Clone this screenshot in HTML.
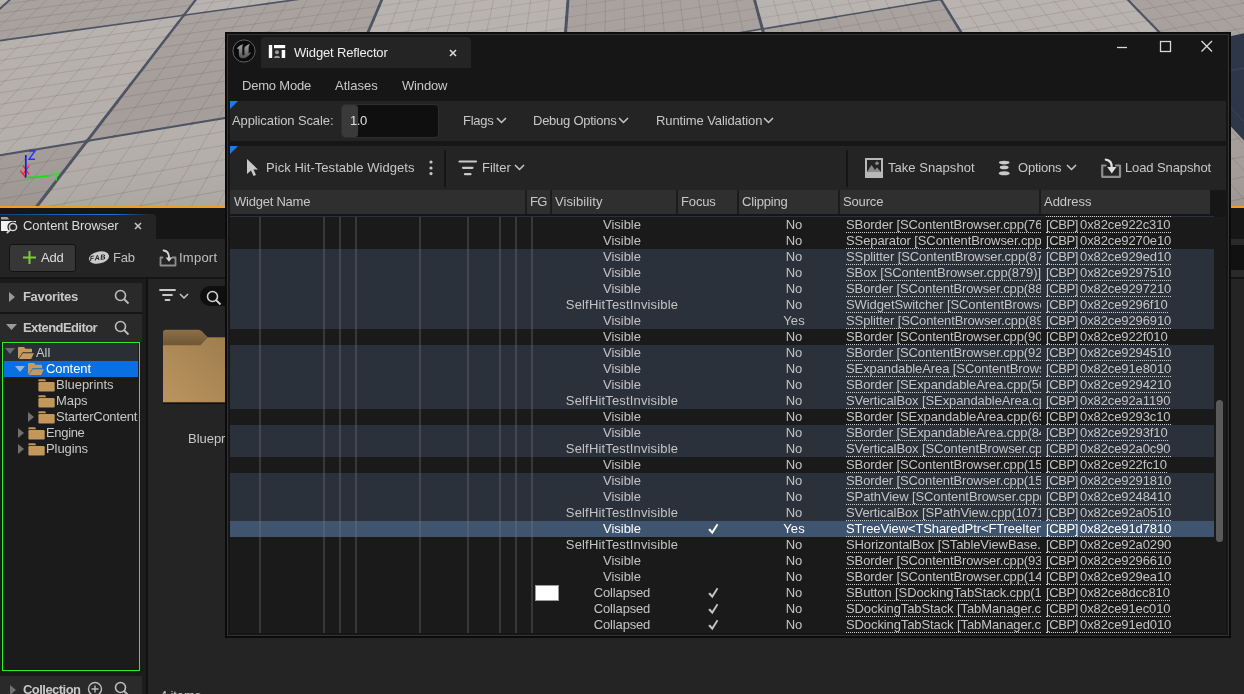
<!DOCTYPE html>
<html><head><meta charset="utf-8"><style>
html,body{margin:0;padding:0;}
body{width:1244px;height:694px;overflow:hidden;position:relative;will-change:transform;background:#242424;font-family:"Liberation Sans", sans-serif;font-size:13px;}
.t{position:absolute;white-space:nowrap;line-height:16px;font-size:13px;}
.r{position:absolute;white-space:nowrap;line-height:15px;height:15px;font-size:13px;overflow:hidden;}
.lk{border-bottom:1px dotted #d0d0d0;}
</style></head><body>
<svg width="1244" height="206" style="position:absolute;left:0;top:0">
<rect width="1244" height="206" fill="#b6b0ad"/>
<polygon points="-295.2,81.5 -42.2,46.5 -200.7,188.5 -531.8,243.4" fill="#a59e9b"/>
<polygon points="-936.3,520.1 -461.3,422.1 -969.2,877.2 -1784.9,1100.7" fill="#a59e9b"/>
<polygon points="64.4,-49.1 250.4,-71.2 183.9,15.2 -42.2,46.5" fill="#a59e9b"/>
<polygon points="-200.7,188.5 87.2,140.9 -66.6,340.6 -461.3,422.1" fill="#a59e9b"/>
<polygon points="183.9,15.2 387.2,-13.0 339.8,99.0 87.2,140.9" fill="#a59e9b"/>
<polygon points="-66.6,340.6 266.7,271.8 138.9,573.6 -348.8,707.2" fill="#a59e9b"/>
<polygon points="420.4,-91.4 576.4,-110.0 571.0,-38.4 387.2,-13.0" fill="#a59e9b"/>
<polygon points="339.8,99.0 563.3,62.0 551.7,213.0 266.7,271.8" fill="#a59e9b"/>
<polygon points="571.0,-38.4 737.9,-61.5 762.4,29.0 563.3,62.0" fill="#a59e9b"/>
<polygon points="551.7,213.0 798.4,162.1 856.6,376.9 532.4,465.7" fill="#a59e9b"/>
<polygon points="720.1,-127.1 852.9,-142.9 890.1,-82.6 737.9,-61.5" fill="#a59e9b"/>
<polygon points="762.4,29.0 940.9,-0.6 1013.9,117.6 798.4,162.1" fill="#a59e9b"/>
<polygon points="890.1,-82.6 1029.6,-101.9 1101.8,-27.2 940.9,-0.6" fill="#a59e9b"/>
<polygon points="1013.9,117.6 1203.9,78.4 1359.2,239.2 1128.3,302.5" fill="#a59e9b"/>
<polygon points="975.9,-157.5 1090.2,-171.1 1157.9,-119.7 1029.6,-101.9" fill="#a59e9b"/>
<polygon points="1101.8,-27.2 1247.6,-51.4 1372.5,43.6 1203.9,78.4" fill="#a59e9b"/>
<polygon points="1157.9,-119.7 1276.2,-136.0 1380.4,-73.4 1247.6,-51.4" fill="#a59e9b"/>
<polygon points="1372.5,43.6 1523.2,12.5 1730.9,137.4 1558.0,184.7" fill="#a59e9b"/>
<path d="M383.2,-3.6L455.6,-13.8M452.8,-4.4L523.8,-14.6M450.0,5.3L522.3,-5.2M520.7,4.5L591.5,-6.0M519.1,14.5L591.2,3.6M591.2,3.6L660.6,-6.8M590.9,13.6L661.5,2.8M661.5,2.8L729.5,-7.7M662.5,12.8L731.6,1.9M731.6,1.9L798.2,-8.5" stroke="#2a2320" stroke-opacity="0.105" stroke-width="0.9" fill="none"/>
<path d="M243.4,-1.9L318.6,-12.2M308.0,7.0L383.2,-3.6M302.4,17.1L379.1,6.2M379.1,6.2L452.8,-4.4M374.8,16.2L450.0,5.3M370.4,26.7L447.0,15.4M447.0,15.4L520.7,4.5M444.0,25.8L519.1,14.5M440.8,36.7L517.4,24.9M517.4,24.9L590.9,13.6M515.6,35.7L590.5,24.0M590.5,24.0L662.5,12.8M590.2,34.8L663.5,23.1M663.5,23.1L733.9,11.9M733.9,11.9L801.6,1.1M801.6,1.1L866.7,-9.3M589.8,46.0L664.5,33.9M664.5,33.9L736.2,22.2M736.2,22.2L805.1,11.0M805.1,11.0L871.3,0.3M871.3,0.3L935.0,-10.1" stroke="#2a2320" stroke-opacity="0.120" stroke-width="0.9" fill="none"/>
<path d="M173.2,-1.1L249.9,-11.4M165.3,8.7L243.4,-1.9M229.8,18.0L308.0,7.0M296.6,27.6L374.8,16.2M290.6,38.6L370.4,26.7M365.8,37.6L444.0,25.8M361.0,48.9L440.8,36.7M437.5,47.9L515.6,35.7M434.1,59.7L513.8,47.0M513.8,47.0L590.2,34.8M511.9,58.7L589.8,46.0M589.0,69.8L666.8,56.6M666.8,56.6L741.2,44.1M741.2,44.1L812.6,32.0M812.6,32.0L881.1,20.4M881.1,20.4L947.0,9.3M947.0,9.3L1010.2,-1.4M1010.2,-1.4L1071.1,-11.7M667.9,68.7L743.9,55.6M743.9,55.6L816.6,43.1M816.6,43.1L886.3,31.1M886.3,31.1L953.3,19.5" stroke="#2a2320" stroke-opacity="0.135" stroke-width="0.9" fill="none"/>
<path d="M12.2,-18.3L-5.7,-2.8M37.2,-8.3L19.8,7.8M19.8,7.8L1.3,24.9M1.3,24.9L-18.4,43.2M58.4,-11.0L41.7,4.9M41.7,4.9L23.9,21.9M23.9,21.9L5.0,39.9M5.0,39.9L-15.1,59.2M79.3,-13.7L63.3,2.1M63.3,2.1L46.3,18.9M46.3,18.9L28.3,36.7M28.3,36.7L9.0,55.7M9.0,55.7L-11.6,76.1M100.0,-16.3L84.7,-0.7M84.7,-0.7L68.5,15.9M68.5,15.9L51.2,33.5M51.2,33.5L32.8,52.3M32.8,52.3L13.2,72.4M13.2,72.4L-7.8,94.0M120.5,-19.0L105.9,-3.5M105.9,-3.5L90.4,12.9M90.4,12.9L74.0,30.4M74.0,30.4L56.4,49.0M56.4,49.0L37.7,68.9M37.7,68.9L17.6,90.1M17.6,90.1L-3.9,112.9M-3.9,112.9L-27.0,137.4M126.9,-6.2L112.1,10.0M112.1,10.0L96.4,27.3M96.4,27.3L79.7,45.7M79.7,45.7L61.9,65.3M61.9,65.3L42.8,86.3M42.8,86.3L22.3,108.8M22.3,108.8L0.3,133.1M0.3,133.1L-23.4,159.2M147.6,-9.0L133.6,7.1M133.6,7.1L118.7,24.2M118.7,24.2L102.8,42.4M102.8,42.4L85.8,61.8M85.8,61.8L67.7,82.6M67.7,82.6L48.2,104.8M48.2,104.8L27.3,128.7M27.3,128.7L4.8,154.5M4.8,154.5L-19.5,182.3M168.2,-11.7L154.8,4.3M154.8,4.3L140.6,21.2M140.6,21.2L125.5,39.2M125.5,39.2L109.4,58.4M109.4,58.4L92.2,78.9M92.2,78.9L73.8,100.9M73.8,100.9L54.0,124.5M54.0,124.5L32.6,149.9M32.6,149.9L9.6,177.3M9.6,177.3L-15.4,207.1M188.5,-14.3L175.9,1.4M175.9,1.4L162.4,18.1M162.4,18.1L148.1,35.9M148.1,35.9L132.8,54.9M132.8,54.9L116.5,75.2M116.5,75.2L99.0,96.9M99.0,96.9L80.3,120.2M80.3,120.2L60.1,145.3M60.1,145.3L38.3,172.4M38.3,172.4L14.7,201.8M14.7,201.8L-10.9,233.6M228.6,-19.6L217.3,-4.2M217.3,-4.2L205.2,12.2M205.2,12.2L192.4,29.6M192.4,29.6L178.8,48.2M178.8,48.2L164.2,68.0M164.2,68.0L148.6,89.2M148.6,89.2L131.9,112.0M131.9,112.0L113.9,136.4M113.9,136.4L94.5,162.8M94.5,162.8L73.5,191.3M73.5,191.3L50.8,222.3M237.6,-6.9L226.3,9.3M226.3,9.3L214.2,26.5M214.2,26.5L201.4,44.9M201.4,44.9L187.6,64.5M187.6,64.5L173.0,85.4M173.0,85.4L157.2,107.9M157.2,107.9L140.3,132.1M140.3,132.1L122.1,158.1M122.1,158.1L102.4,186.2M102.4,186.2L81.0,216.7M257.8,-9.6L247.1,6.4M247.1,6.4L235.8,23.5M235.8,23.5L223.7,41.6M223.7,41.6L210.8,61.0M210.8,61.0L197.0,81.7M197.0,81.7L182.2,103.9M182.2,103.9L166.4,127.7M166.4,127.7L149.2,153.4M149.2,153.4L130.8,181.2M130.8,181.2L110.7,211.3M277.8,-12.3L267.8,3.6M267.8,3.6L257.1,20.4M257.1,20.4L245.8,38.4M245.8,38.4L233.7,57.5M233.7,57.5L220.8,78.0M220.8,78.0L206.9,99.9M206.9,99.9L192.1,123.5M192.1,123.5L176.1,148.8M176.1,148.8L158.8,176.2M158.8,176.2L140.1,205.9M140.1,205.9L119.7,238.1M297.6,-15.0L288.2,0.7M288.2,0.7L278.2,17.4M278.2,17.4L267.6,35.2M267.6,35.2L256.3,54.1M256.3,54.1L244.3,74.3M244.3,74.3L231.4,96.0M231.4,96.0L217.5,119.3M217.5,119.3L202.5,144.3M202.5,144.3L186.4,171.3M186.4,171.3L169.0,200.6M169.0,200.6L150.0,232.3M317.1,-17.6L308.4,-2.1M308.4,-2.1L299.1,14.5M299.1,14.5L289.3,32.0M289.3,32.0L278.7,50.7M278.7,50.7L267.5,70.7M267.5,70.7L255.5,92.1M255.5,92.1L242.6,115.1M242.6,115.1L228.7,139.8M228.7,139.8L213.7,166.5M213.7,166.5L197.5,195.3M197.5,195.3L179.9,226.6M336.5,-20.2L328.4,-4.8M328.4,-4.8L319.8,11.5M319.8,11.5L310.6,28.9M310.6,28.9L300.9,47.4M300.9,47.4L290.4,67.2M290.4,67.2L279.3,88.3M279.3,88.3L267.3,111.0M267.3,111.0L254.5,135.4M254.5,135.4L240.6,161.7M240.6,161.7L225.6,190.1M225.6,190.1L209.3,221.0M348.2,-7.6L340.2,8.6M340.2,8.6L331.8,25.8M331.8,25.8L322.7,44.1M322.7,44.1L313.1,63.6M313.1,63.6L302.8,84.5M302.8,84.5L291.8,107.0M291.8,107.0L279.9,131.0M279.9,131.0L267.1,157.0M267.1,157.0L253.3,185.1M253.3,185.1L238.3,215.5M367.8,-10.3L360.5,5.7M360.5,5.7L352.7,22.7M352.7,22.7L344.4,40.8M344.4,40.8L335.5,60.2M335.5,60.2L326.1,80.8M326.1,80.8L315.9,103.0M315.9,103.0L305.1,126.7M305.1,126.7L293.3,152.4M293.3,152.4L280.6,180.0M280.6,180.0L266.9,210.0M266.9,210.0L252.0,242.6M406.4,-15.6L400.3,0.0M400.3,0.0L393.8,16.7M393.8,16.7L387.0,34.4M387.0,34.4L379.6,53.3M379.6,53.3L371.8,73.5M371.8,73.5L363.4,95.1M363.4,95.1L354.4,118.3M354.4,118.3L344.7,143.3M344.7,143.3L334.2,170.2M334.2,170.2L322.9,199.4M322.9,199.4L310.6,231.0M425.4,-18.3L419.9,-2.7M419.9,-2.7L414.1,13.7M414.1,13.7L407.9,31.3M407.9,31.3L401.3,49.9M401.3,49.9L394.2,69.9M394.2,69.9L386.7,91.2M386.7,91.2L378.6,114.1M378.6,114.1L369.8,138.8M369.8,138.8L360.4,165.4M360.4,165.4L350.3,194.1M350.3,194.1L339.2,225.3M439.3,-5.5L434.1,10.8M434.1,10.8L428.6,28.1M428.6,28.1L422.7,46.6M422.7,46.6L416.4,66.3M416.4,66.3L409.7,87.4M409.7,87.4L402.4,110.1M402.4,110.1L394.7,134.4M394.7,134.4L386.3,160.6M386.3,160.6L377.3,189.0M377.3,189.0L367.4,219.7M458.6,-8.2L454.0,7.9M454.0,7.9L449.1,25.1M449.1,25.1L443.9,43.3M443.9,43.3L438.3,62.8M438.3,62.8L432.4,83.7M432.4,83.7L426.0,106.0M426.0,106.0L419.2,130.0M419.2,130.0L411.8,155.9M411.8,155.9L403.9,183.9M403.9,183.9L395.2,214.2M477.6,-10.9L473.6,5.0M473.6,5.0L469.3,22.0M469.3,22.0L464.8,40.1M464.8,40.1L460.0,59.3M460.0,59.3L454.9,79.9M454.9,79.9L449.3,102.0M449.3,102.0L443.4,125.7M443.4,125.7L437.0,151.3M437.0,151.3L430.1,178.9M430.1,178.9L422.7,208.8M422.7,208.8L414.5,241.3M496.4,-13.6L493.0,2.2M493.0,2.2L489.4,19.0M489.4,19.0L485.5,36.8M485.5,36.8L481.4,55.9M481.4,55.9L477.1,76.3M477.1,76.3L472.4,98.1M472.4,98.1L467.3,121.5M467.3,121.5L461.9,146.7M461.9,146.7L456.0,174.0M456.0,174.0L449.7,203.4M449.7,203.4L442.8,235.5M515.0,-16.3L512.2,-0.6M512.2,-0.6L509.2,16.0M509.2,16.0L506.0,33.7M506.0,33.7L502.6,52.5M502.6,52.5L499.0,72.6M499.0,72.6L495.1,94.2M495.1,94.2L490.9,117.3M490.9,117.3L486.4,142.2M486.4,142.2L481.6,169.1M481.6,169.1L476.3,198.2M476.3,198.2L470.6,229.7M533.5,-18.9L531.2,-3.4M531.2,-3.4L528.8,13.0M528.8,13.0L526.3,30.5M526.3,30.5L523.6,49.1M523.6,49.1L520.7,69.0M520.7,69.0L517.6,90.3M517.6,90.3L514.2,113.2M514.2,113.2L510.7,137.8M510.7,137.8L506.8,164.3M506.8,164.3L502.6,192.9M502.6,192.9L498.1,224.1M550.1,-6.2L548.3,10.1M548.3,10.1L546.3,27.4M546.3,27.4L544.3,45.8M544.3,45.8L542.1,65.5M542.1,65.5L539.8,86.5M539.8,86.5L537.3,109.1M537.3,109.1L534.6,133.4M534.6,133.4L531.7,159.5M531.7,159.5L528.5,187.8M528.5,187.8L525.1,218.5M587.1,-11.6L586.5,4.3M586.5,4.3L585.8,21.3M585.8,21.3L585.0,39.3M585.0,39.3L584.2,58.5M584.2,58.5L583.4,79.1M583.4,79.1L582.4,101.1M582.4,101.1L581.5,124.8M581.5,124.8L580.4,150.2M580.4,150.2L579.2,177.8M579.2,177.8L578.0,207.6M578.0,207.6L576.7,240.0M605.4,-14.3L605.3,1.5M605.3,1.5L605.2,18.2M605.2,18.2L605.1,36.1M605.1,36.1L604.9,55.1M604.9,55.1L604.8,75.4M604.8,75.4L604.6,97.2M604.6,97.2L604.5,120.5M604.5,120.5L604.3,145.7M604.3,145.7L604.1,172.8M604.1,172.8L603.9,202.2M603.9,202.2L603.7,234.2M623.5,-16.9L623.9,-1.3M623.9,-1.3L624.4,15.3M624.4,15.3L624.9,32.9M624.9,32.9L625.4,51.7M625.4,51.7L625.9,71.8M625.9,71.8L626.5,93.3M626.5,93.3L627.2,116.4M627.2,116.4L627.9,141.2M627.9,141.2L628.6,168.0M628.6,168.0L629.4,197.0M629.4,197.0L630.3,228.4M641.4,-19.5L642.3,-4.1M642.3,-4.1L643.4,12.3M643.4,12.3L644.5,29.8M644.5,29.8L645.6,48.3M645.6,48.3L646.9,68.2M646.9,68.2L648.2,89.4M648.2,89.4L649.6,112.2M649.6,112.2L651.1,136.7M651.1,136.7L652.8,163.2M652.8,163.2L654.6,191.8M654.6,191.8L656.5,222.8M660.6,-6.8L662.2,9.4M662.2,9.4L663.8,26.6M663.8,26.6L665.6,45.0M665.6,45.0L667.5,64.7M667.5,64.7L669.6,85.6M669.6,85.6L671.8,108.2M671.8,108.2L674.1,132.4M674.1,132.4L676.6,158.4M676.6,158.4L679.4,186.6M679.4,186.6L682.3,217.2M678.6,-9.6L680.8,6.5M680.8,6.5L683.0,23.6M683.0,23.6L685.4,41.8M685.4,41.8L688.0,61.2M688.0,61.2L690.7,81.9M690.7,81.9L693.6,104.1M693.6,104.1L696.8,128.0M696.8,128.0L700.2,153.8M700.2,153.8L703.8,181.6M703.8,181.6L707.8,211.7M696.5,-12.3L699.2,3.6M699.2,3.6L702.0,20.5M702.0,20.5L705.0,38.5M705.0,38.5L708.2,57.7M708.2,57.7L711.6,78.2M711.6,78.2L715.2,100.2M715.2,100.2L719.2,123.8M719.2,123.8L723.4,149.2M723.4,149.2L728.0,176.6M728.0,176.6L732.9,206.3M732.9,206.3L738.3,238.7M714.2,-14.9L717.4,0.8M717.4,0.8L720.7,17.5M720.7,17.5L724.3,35.3M724.3,35.3L728.1,54.3M728.1,54.3L732.2,74.5M732.2,74.5L736.6,96.2M736.6,96.2L741.3,119.5M741.3,119.5L746.3,144.6M746.3,144.6L751.8,171.7M751.8,171.7L757.7,201.0M757.7,201.0L764.1,232.9M731.7,-17.6L735.4,-2.0M735.4,-2.0L739.3,14.5M739.3,14.5L743.5,32.1M743.5,32.1L747.9,50.9M747.9,50.9L752.6,70.9M752.6,70.9L757.7,92.4M757.7,92.4L763.1,115.4M763.1,115.4L768.9,140.1M768.9,140.1L775.2,166.9M775.2,166.9L782.1,195.8M782.1,195.8L789.5,227.1M770.9,-7.5L775.8,8.7M775.8,8.7L781.1,25.9M781.1,25.9L786.7,44.2M786.7,44.2L792.7,63.8M792.7,63.8L799.1,84.8M799.1,84.8L805.9,107.2M805.9,107.2L813.3,131.3M813.3,131.3L821.3,157.4M821.3,157.4L829.9,185.5M829.9,185.5L839.2,216.0M788.4,-10.2L793.8,5.8M793.8,5.8L799.6,22.8M799.6,22.8L805.8,41.0M805.8,41.0L812.4,60.3M812.4,60.3L819.4,81.0M819.4,81.0L827.0,103.2M827.0,103.2L835.1,127.0M835.1,127.0L843.8,152.7M843.8,152.7L853.2,180.4M853.2,180.4L863.5,210.5M863.5,210.5L874.6,243.2M805.7,-12.9L811.6,2.9M811.6,2.9L817.9,19.8M817.9,19.8L824.7,37.7M824.7,37.7L831.8,56.9M831.8,56.9L839.5,77.3M839.5,77.3L847.7,99.2M847.7,99.2L856.6,122.8M856.6,122.8L866.1,148.1M866.1,148.1L876.3,175.5M876.3,175.5L887.4,205.1M887.4,205.1L899.5,237.3M822.8,-15.6L829.2,0.1M829.2,0.1L836.1,16.8M836.1,16.8L843.3,34.5M843.3,34.5L851.1,53.5M851.1,53.5L859.4,73.7M859.4,73.7L868.2,95.3M868.2,95.3L877.8,118.6M877.8,118.6L888.0,143.6M888.0,143.6L899.1,170.6M899.1,170.6L911.0,199.8M911.0,199.8L924.1,231.6M839.7,-18.2L846.7,-2.7M846.7,-2.7L854.0,13.8M854.0,13.8L861.8,31.4M861.8,31.4L870.1,50.1M870.1,50.1L879.0,70.1M879.0,70.1L888.5,91.5M888.5,91.5L898.7,114.4M898.7,114.4L909.7,139.1M909.7,139.1L921.5,165.7M921.5,165.7L934.3,194.6M934.3,194.6L948.2,225.9M863.9,-5.4L871.7,10.9M871.7,10.9L880.1,28.3M880.1,28.3L888.9,46.8M888.9,46.8L898.4,66.5M898.4,66.5L908.5,87.6M908.5,87.6L919.4,110.3M919.4,110.3L931.1,134.7M931.1,134.7L943.7,161.0M943.7,161.0L957.3,189.4M957.3,189.4L972.1,220.3M881.0,-8.2L889.3,8.0M889.3,8.0L898.1,25.2M898.1,25.2L907.5,43.5M907.5,43.5L917.6,63.0M917.6,63.0L928.3,83.9M928.3,83.9L939.8,106.3M939.8,106.3L952.2,130.3M952.2,130.3L965.5,156.3M965.5,156.3L979.9,184.3M979.9,184.3L995.6,214.7M897.9,-10.9L906.7,5.1M906.7,5.1L916.0,22.1M916.0,22.1L925.9,40.2M925.9,40.2L936.5,59.5M936.5,59.5L947.8,80.1M947.8,80.1L960.0,102.3M960.0,102.3L973.0,126.0M973.0,126.0L987.1,151.6M987.1,151.6L1002.3,179.3M1002.3,179.3L1018.7,209.3M1018.7,209.3L1036.6,241.9M914.6,-13.6L923.9,2.3M923.9,2.3L933.7,19.1M933.7,19.1L944.1,37.0M944.1,37.0L955.3,56.1M955.3,56.1L967.2,76.5M967.2,76.5L979.9,98.3M979.9,98.3L993.6,121.8M993.6,121.8L1008.4,147.1M1008.4,147.1L1024.3,174.3M1024.3,174.3L1041.5,203.9M1041.5,203.9L1060.3,236.0M947.6,-18.9L957.7,-3.4M957.7,-3.4L968.5,13.1M968.5,13.1L979.9,30.6M979.9,30.6L992.1,49.3M992.1,49.3L1005.1,69.2M1005.1,69.2L1019.0,90.6M1019.0,90.6L1034.0,113.5M1034.0,113.5L1050.1,138.1M1050.1,138.1L1067.4,164.6M1067.4,164.6L1086.2,193.4M1086.2,193.4L1106.6,224.6M974.4,-6.1L985.6,10.2M985.6,10.2L997.5,27.5M997.5,27.5L1010.2,46.0M1010.2,46.0L1023.7,65.7M1023.7,65.7L1038.3,86.8M1038.3,86.8L1053.8,109.4M1053.8,109.4L1070.5,133.7M1070.5,133.7L1088.6,159.9M1088.6,159.9L1108.1,188.2M1108.1,188.2L1129.2,219.0M990.9,-8.8L1002.5,7.3M1002.5,7.3L1014.9,24.4M1014.9,24.4L1028.1,42.7M1028.1,42.7L1042.2,62.2M1042.2,62.2L1057.2,83.0M1057.2,83.0L1073.4,105.3M1073.4,105.3L1090.7,129.3M1090.7,129.3L1109.4,155.2M1109.4,155.2L1129.6,183.2M1129.6,183.2L1151.5,213.5M1007.2,-11.6L1019.3,4.4M1019.3,4.4L1032.1,21.4M1032.1,21.4L1045.8,39.4M1045.8,39.4L1060.4,58.7M1060.4,58.7L1076.0,79.3M1076.0,79.3L1092.7,101.3M1092.7,101.3L1110.7,125.0M1110.7,125.0L1130.0,150.6M1130.0,150.6L1150.9,178.2M1150.9,178.2L1173.5,208.0M1173.5,208.0L1198.1,240.5M1023.4,-14.2L1035.9,1.6M1035.9,1.6L1049.2,18.3M1049.2,18.3L1063.3,36.2M1063.3,36.2L1078.4,55.2M1078.4,55.2L1094.5,75.6M1094.5,75.6L1111.8,97.4M1111.8,97.4L1130.3,120.8M1130.3,120.8L1150.3,146.0M1150.3,146.0L1171.9,173.2M1171.9,173.2L1195.2,202.7M1195.2,202.7L1220.6,234.7M1039.4,-16.9L1052.3,-1.2M1052.3,-1.2L1066.0,15.4M1066.0,15.4L1080.6,33.0M1080.6,33.0L1096.2,51.8M1096.2,51.8L1112.8,72.0M1112.8,72.0L1130.7,93.5M1130.7,93.5L1149.8,116.6M1149.8,116.6L1170.4,141.5M1170.4,141.5L1192.6,168.3M1192.6,168.3L1216.6,197.4M1216.6,197.4L1242.7,229.0M1055.2,-19.5L1068.5,-4.0M1068.5,-4.0L1082.7,12.4M1082.7,12.4L1097.8,29.9M1097.8,29.9L1113.8,48.5M1113.8,48.5L1130.9,68.4M1130.9,68.4L1149.3,89.7M1149.3,89.7L1169.0,112.5M1169.0,112.5L1190.1,137.1M1190.1,137.1L1213.0,163.5M1213.0,163.5L1237.7,192.2M1237.7,192.2L1264.5,223.3M1084.6,-6.8L1099.2,9.5M1099.2,9.5L1114.7,26.8M1114.7,26.8L1131.2,45.2M1131.2,45.2L1148.8,64.8M1148.8,64.8L1167.7,85.9M1167.7,85.9L1187.9,108.4M1187.9,108.4L1209.7,132.7M1209.7,132.7L1233.1,158.8M1233.1,158.8L1258.4,187.1M1100.5,-9.5L1115.5,6.6M1115.5,6.6L1131.5,23.7M1131.5,23.7L1148.4,41.9M1148.4,41.9L1166.5,61.3M1166.5,61.3L1185.9,82.1M1185.9,82.1L1206.6,104.4M1206.6,104.4L1228.9,128.3M1228.9,128.3L1253.0,154.1M1131.9,-14.9L1147.7,0.9M1147.7,0.9L1164.4,17.6M1164.4,17.6L1182.3,35.4M1182.3,35.4L1201.3,54.4M1201.3,54.4L1221.6,74.7M1221.6,74.7L1243.4,96.5M1243.4,96.5L1266.8,119.8M1147.3,-17.5L1163.5,-1.9M1163.5,-1.9L1180.7,14.6M1180.7,14.6L1198.9,32.3M1198.9,32.3L1218.4,51.0M1218.4,51.0L1239.2,71.1M1239.2,71.1L1261.4,92.6M1162.6,-20.1L1179.2,-4.7M1179.2,-4.7L1196.7,11.7M1196.7,11.7L1215.4,29.1M1215.4,29.1L1235.3,47.7M1235.3,47.7L1256.5,67.5M1194.7,-7.5L1212.6,8.8M1212.6,8.8L1231.7,26.0M1231.7,26.0L1252.0,44.4M1210.0,-10.2L1228.3,5.9M1228.3,5.9L1247.8,22.9M1247.8,22.9L1268.5,41.1M1225.2,-12.9L1243.9,3.0M1243.9,3.0L1263.7,19.9M1240.2,-15.5L1259.3,0.2M-38.4,1.4L42.5,-9.0M-50.4,11.3L32.3,0.5M32.3,0.5L111.8,-9.8M-62.7,21.6L21.7,10.4M21.7,10.4L102.9,-0.3M102.9,-0.3L180.9,-10.6M-75.5,32.2L10.7,20.7M10.7,20.7L93.6,9.6M93.6,9.6L173.2,-1.1M-88.9,43.3L-0.7,31.3M-0.7,31.3L84.0,19.8M84.0,19.8L165.3,8.7M-24.9,53.9L63.6,41.4M63.6,41.4L148.4,29.5M148.4,29.5L229.8,18.0M-37.7,65.8L52.8,52.9M52.8,52.9L139.5,40.5M139.5,40.5L222.6,28.6M222.6,28.6L302.4,17.1M-51.0,78.3L41.5,64.8M41.5,64.8L130.2,51.9M130.2,51.9L215.1,39.5M215.1,39.5L296.6,27.6M-65.0,91.2L29.8,77.2M29.8,77.2L120.5,63.8M120.5,63.8L207.3,50.9M207.3,50.9L290.6,38.6M-79.5,104.8L17.6,90.1M17.6,90.1L110.5,76.1M110.5,76.1L199.3,62.7M199.3,62.7L284.3,49.9M284.3,49.9L365.8,37.6M-94.6,118.9L4.9,103.6M4.9,103.6L100.0,89.0M100.0,89.0L190.8,75.1M190.8,75.1L277.8,61.7M277.8,61.7L361.0,48.9M-8.4,117.7L89.0,102.4M89.0,102.4L182.1,87.9M182.1,87.9L271.0,74.0M271.0,74.0L356.0,60.7M356.0,60.7L437.5,47.9M-22.2,132.4L77.6,116.5M77.6,116.5L172.9,101.3M172.9,101.3L263.9,86.8M263.9,86.8L350.8,72.9M350.8,72.9L434.1,59.7M-36.7,147.8L65.7,131.1M65.7,131.1L163.3,115.3M163.3,115.3L256.5,100.1M256.5,100.1L345.4,85.7M345.4,85.7L430.5,71.9M430.5,71.9L511.9,58.7M-67.9,180.8L40.2,162.5M40.2,162.5L142.9,145.2M142.9,145.2L240.7,128.6M240.7,128.6L333.9,112.9M333.9,112.9L422.9,97.9M422.9,97.9L507.8,83.5M507.8,83.5L589.0,69.8M-84.6,198.5L26.5,179.4M26.5,179.4L132.0,161.2M132.0,161.2L232.3,143.9M232.3,143.9L327.8,127.4M327.8,127.4L418.8,111.7M418.8,111.7L505.6,96.7M505.6,96.7L588.6,82.4M588.6,82.4L667.9,68.7M953.3,19.5L1017.6,8.4M1017.6,8.4L1079.4,-2.2M1079.4,-2.2L1138.9,-12.5M-102.1,217.1L12.2,197.0M12.2,197.0L120.6,177.9M120.6,177.9L223.5,159.8M223.5,159.8L321.4,142.6M321.4,142.6L414.6,126.2M414.6,126.2L503.4,110.5M503.4,110.5L588.2,95.6M588.2,95.6L669.1,81.3M669.1,81.3L746.6,67.7M746.6,67.7L820.7,54.6M820.7,54.6L891.7,42.1M891.7,42.1L959.9,30.1M959.9,30.1L1025.2,18.6M1025.2,18.6L1088.0,7.6M1088.0,7.6L1148.4,-3.0M1148.4,-3.0L1206.5,-13.3M-2.9,215.6L108.5,195.5M108.5,195.5L214.2,176.5M214.2,176.5L314.6,158.4M314.6,158.4L410.1,141.3M410.1,141.3L501.0,124.9M501.0,124.9L587.7,109.3M587.7,109.3L670.4,94.5M670.4,94.5L749.4,80.3M749.4,80.3L825.0,66.7M825.0,66.7L897.4,53.6M897.4,53.6L966.7,41.2M966.7,41.2L1033.2,29.2M1033.2,29.2L1097.0,17.8M1097.0,17.8L1158.3,6.7M1158.3,6.7L1217.2,-3.9M1217.2,-3.9L1273.9,-14.1M95.9,214.0L204.6,194.0M204.6,194.0L307.6,175.1M307.6,175.1L405.5,157.1M405.5,157.1L498.6,140.0M498.6,140.0L587.2,123.7M587.2,123.7L671.8,108.2M671.8,108.2L752.4,93.3M752.4,93.3L829.5,79.2M829.5,79.2L903.2,65.6M903.2,65.6L973.8,52.7M973.8,52.7L1041.4,40.2M1041.4,40.2L1106.3,28.3M1106.3,28.3L1168.5,16.9M1168.5,16.9L1228.3,5.9M1228.3,5.9L1285.8,-4.7M194.4,212.4L300.2,192.5M300.2,192.5L400.6,173.7M400.6,173.7L496.0,155.7M496.0,155.7L586.7,138.7M586.7,138.7L673.1,122.5M673.1,122.5L755.5,107.0M755.5,107.0L834.2,92.2M834.2,92.2L909.3,78.1M909.3,78.1L981.2,64.6M981.2,64.6L1050.0,51.7M1050.0,51.7L1115.9,39.3M1115.9,39.3L1179.1,27.4M1179.1,27.4L1239.8,16.0M1239.8,16.0L1298.2,5.0M183.7,231.8L292.5,210.9M292.5,210.9L395.5,191.1M395.5,191.1L493.3,172.3M493.3,172.3L586.2,154.4M586.2,154.4L674.6,137.4M674.6,137.4L758.8,121.2M758.8,121.2L839.0,105.8M839.0,105.8L915.6,91.1M915.6,91.1L988.8,77.0M988.8,77.0L1058.9,63.6M1058.9,63.6L1125.9,50.7M1125.9,50.7L1190.2,38.3M1190.2,38.3L1251.8,26.5M284.3,230.1L390.2,209.3M390.2,209.3L490.5,189.6M490.5,189.6L585.7,170.9M585.7,170.9L676.1,153.1M676.1,153.1L762.2,136.1M762.2,136.1L844.1,120.0M844.1,120.0L922.2,104.7M922.2,104.7L996.9,90.0M996.9,90.0L1068.1,76.0M1068.1,76.0L1136.3,62.5M1136.3,62.5L1201.7,49.7M1201.7,49.7L1264.2,37.4M384.5,228.5L487.5,207.8M487.5,207.8L585.1,188.1M585.1,188.1L677.7,169.5M677.7,169.5L765.7,151.7M765.7,151.7L849.4,134.9M849.4,134.9L929.2,118.8M929.2,118.8L1005.2,103.5M1005.2,103.5L1077.8,88.9M1077.8,88.9L1147.2,74.9M1147.2,74.9L1213.6,61.5M1213.6,61.5L1277.2,48.7M583.9,225.3L681.1,204.7M681.1,204.7L773.3,185.2M773.3,185.2L860.8,166.7M860.8,166.7L943.9,149.1M943.9,149.1L1023.0,132.3M1023.0,132.3L1098.4,116.4M1098.4,116.4L1170.3,101.2M1170.3,101.2L1239.0,86.7M1239.0,86.7L1304.6,72.8M683.0,223.7L777.4,203.2M777.4,203.2L866.9,183.7M866.9,183.7L951.8,165.3M951.8,165.3L1032.6,147.8M1032.6,147.8L1109.4,131.1M1109.4,131.1L1182.6,115.2M1182.6,115.2L1252.5,100.0M781.7,222.1L873.3,201.6M873.3,201.6L960.1,182.3M960.1,182.3L1042.6,163.9M1042.6,163.9L1120.9,146.4M1120.9,146.4L1195.5,129.8M1195.5,129.8L1266.6,114.0M880.0,220.5L968.8,200.1M968.8,200.1L1053.0,180.8M1053.0,180.8L1133.0,162.5M1133.0,162.5L1209.0,145.1M1209.0,145.1L1281.3,128.6M978.0,218.9L1064.0,198.6M1064.0,198.6L1145.6,179.4M1145.6,179.4L1223.1,161.2M1223.1,161.2L1296.7,143.8M1075.6,217.3L1158.9,197.1M1158.9,197.1L1237.8,178.0M1237.8,178.0L1312.8,159.8M1172.8,215.7L1253.3,195.6" stroke="#2a2320" stroke-opacity="0.150" stroke-width="0.9" fill="none"/>
<defs><linearGradient id="vg" x1="0" y1="0" x2="0" y2="1"><stop offset="0" stop-color="#fff" stop-opacity="0.05"/><stop offset="0.5" stop-color="#fff" stop-opacity="0"/><stop offset="1" stop-color="#000" stop-opacity="0.05"/></linearGradient></defs><rect width="1244" height="206" fill="url(#vg)"/>
<g stroke="#4f5463" stroke-linecap="round"><line x1="26.3" y1="-14.9" x2="12.3" y2="-2.4" stroke-width="1.89"/><line x1="12.3" y1="-2.4" x2="-2.3" y2="10.7" stroke-width="1.94"/><line x1="-2.3" y1="10.7" x2="-17.6" y2="24.5" stroke-width="1.98"/><line x1="208.7" y1="-17.0" x2="199.1" y2="-4.6" stroke-width="2.24"/><line x1="199.1" y1="-4.6" x2="189.1" y2="8.4" stroke-width="2.29"/><line x1="189.1" y1="8.4" x2="178.6" y2="22.1" stroke-width="2.35"/><line x1="178.6" y1="22.1" x2="167.5" y2="36.4" stroke-width="2.41"/><line x1="167.5" y1="36.4" x2="155.9" y2="51.5" stroke-width="2.47"/><line x1="155.9" y1="51.5" x2="143.7" y2="67.5" stroke-width="2.54"/><line x1="143.7" y1="67.5" x2="130.7" y2="84.3" stroke-width="2.61"/><line x1="130.7" y1="84.3" x2="117.0" y2="102.1" stroke-width="2.68"/><line x1="117.0" y1="102.1" x2="102.5" y2="120.9" stroke-width="2.76"/><line x1="102.5" y1="120.9" x2="87.2" y2="140.9" stroke-width="2.84"/><line x1="87.2" y1="140.9" x2="70.8" y2="162.1" stroke-width="2.93"/><line x1="70.8" y1="162.1" x2="53.5" y2="184.7" stroke-width="3.02"/><line x1="53.5" y1="184.7" x2="34.9" y2="208.8" stroke-width="3.12"/><line x1="34.9" y1="208.8" x2="15.1" y2="234.5" stroke-width="3.23"/><line x1="384.6" y1="-6.7" x2="379.1" y2="6.2" stroke-width="2.66"/><line x1="379.1" y1="6.2" x2="373.4" y2="19.7" stroke-width="2.72"/><line x1="373.4" y1="19.7" x2="367.3" y2="33.9" stroke-width="2.79"/><line x1="367.3" y1="33.9" x2="361.0" y2="48.9" stroke-width="2.86"/><line x1="361.0" y1="48.9" x2="354.3" y2="64.7" stroke-width="2.94"/><line x1="354.3" y1="64.7" x2="347.3" y2="81.4" stroke-width="3.02"/><line x1="347.3" y1="81.4" x2="339.8" y2="99.0" stroke-width="3.10"/><line x1="339.8" y1="99.0" x2="331.9" y2="117.7" stroke-width="3.19"/><line x1="331.9" y1="117.7" x2="323.5" y2="137.4" stroke-width="3.29"/><line x1="323.5" y1="137.4" x2="314.6" y2="158.4" stroke-width="3.39"/><line x1="314.6" y1="158.4" x2="305.2" y2="180.8" stroke-width="3.50"/><line x1="305.2" y1="180.8" x2="295.1" y2="204.6" stroke-width="3.61"/><line x1="295.1" y1="204.6" x2="284.3" y2="230.1" stroke-width="3.73"/><line x1="568.7" y1="-8.9" x2="567.7" y2="3.9" stroke-width="2.87"/><line x1="567.7" y1="3.9" x2="566.7" y2="17.3" stroke-width="2.94"/><line x1="566.7" y1="17.3" x2="565.6" y2="31.5" stroke-width="3.01"/><line x1="565.6" y1="31.5" x2="564.5" y2="46.3" stroke-width="3.09"/><line x1="564.5" y1="46.3" x2="563.3" y2="62.0" stroke-width="3.17"/><line x1="563.3" y1="62.0" x2="562.0" y2="78.5" stroke-width="3.26"/><line x1="562.0" y1="78.5" x2="560.7" y2="96.0" stroke-width="3.35"/><line x1="560.7" y1="96.0" x2="559.3" y2="114.4" stroke-width="3.44"/><line x1="559.3" y1="114.4" x2="557.8" y2="134.0" stroke-width="3.55"/><line x1="557.8" y1="134.0" x2="556.2" y2="154.8" stroke-width="3.65"/><line x1="556.2" y1="154.8" x2="554.5" y2="177.0" stroke-width="3.77"/><line x1="554.5" y1="177.0" x2="552.7" y2="200.6" stroke-width="3.89"/><line x1="552.7" y1="200.6" x2="550.8" y2="225.8" stroke-width="4.02"/><line x1="751.5" y1="-11.0" x2="755.0" y2="1.7" stroke-width="2.77"/><line x1="755.0" y1="1.7" x2="758.6" y2="15.0" stroke-width="2.83"/><line x1="758.6" y1="15.0" x2="762.4" y2="29.0" stroke-width="2.91"/><line x1="762.4" y1="29.0" x2="766.4" y2="43.7" stroke-width="2.98"/><line x1="766.4" y1="43.7" x2="770.6" y2="59.3" stroke-width="3.06"/><line x1="770.6" y1="59.3" x2="775.0" y2="75.7" stroke-width="3.14"/><line x1="775.0" y1="75.7" x2="779.7" y2="93.0" stroke-width="3.23"/><line x1="779.7" y1="93.0" x2="784.7" y2="111.3" stroke-width="3.32"/><line x1="784.7" y1="111.3" x2="789.9" y2="130.7" stroke-width="3.42"/><line x1="789.9" y1="130.7" x2="795.5" y2="151.3" stroke-width="3.52"/><line x1="795.5" y1="151.3" x2="801.4" y2="173.2" stroke-width="3.63"/><line x1="801.4" y1="173.2" x2="807.7" y2="196.6" stroke-width="3.75"/><line x1="807.7" y1="196.6" x2="814.5" y2="221.5" stroke-width="3.88"/><line x1="933.1" y1="-13.2" x2="940.9" y2="-0.6" stroke-width="2.43"/><line x1="940.9" y1="-0.6" x2="949.0" y2="12.7" stroke-width="2.49"/><line x1="949.0" y1="12.7" x2="957.6" y2="26.6" stroke-width="2.55"/><line x1="957.6" y1="26.6" x2="966.7" y2="41.2" stroke-width="2.62"/><line x1="966.7" y1="41.2" x2="976.2" y2="56.6" stroke-width="2.69"/><line x1="976.2" y1="56.6" x2="986.2" y2="72.8" stroke-width="2.76"/><line x1="986.2" y1="72.8" x2="996.9" y2="90.0" stroke-width="2.83"/><line x1="996.9" y1="90.0" x2="1008.1" y2="108.1" stroke-width="2.92"/><line x1="1008.1" y1="108.1" x2="1020.0" y2="127.4" stroke-width="3.00"/><line x1="1020.0" y1="127.4" x2="1032.6" y2="147.8" stroke-width="3.09"/><line x1="1032.6" y1="147.8" x2="1046.0" y2="169.5" stroke-width="3.19"/><line x1="1046.0" y1="169.5" x2="1060.3" y2="192.6" stroke-width="3.29"/><line x1="1060.3" y1="192.6" x2="1075.6" y2="217.3" stroke-width="3.40"/><line x1="1113.3" y1="-15.3" x2="1125.4" y2="-2.8" stroke-width="2.05"/><line x1="1125.4" y1="-2.8" x2="1138.1" y2="10.4" stroke-width="2.10"/><line x1="1138.1" y1="10.4" x2="1151.4" y2="24.1" stroke-width="2.15"/><line x1="1151.4" y1="24.1" x2="1165.4" y2="38.6" stroke-width="2.21"/><line x1="1165.4" y1="38.6" x2="1180.2" y2="53.9" stroke-width="2.26"/><line x1="1180.2" y1="53.9" x2="1195.8" y2="70.0" stroke-width="2.32"/><line x1="1195.8" y1="70.0" x2="1212.2" y2="87.0" stroke-width="2.39"/><line x1="1212.2" y1="87.0" x2="1229.6" y2="105.0" stroke-width="2.46"/><line x1="1229.6" y1="105.0" x2="1248.0" y2="124.1" stroke-width="2.53"/><line x1="1248.0" y1="124.1" x2="1267.5" y2="144.3" stroke-width="2.60"/><line x1="-66.2" y1="49.8" x2="5.0" y2="39.9" stroke-width="1.60"/><line x1="5.0" y1="39.9" x2="74.0" y2="30.4" stroke-width="1.60"/><line x1="74.0" y1="30.4" x2="140.6" y2="21.2" stroke-width="1.60"/><line x1="140.6" y1="21.2" x2="205.2" y2="12.2" stroke-width="1.60"/><line x1="205.2" y1="12.2" x2="267.8" y2="3.6" stroke-width="1.60"/><line x1="267.8" y1="3.6" x2="328.4" y2="-4.8" stroke-width="1.60"/><line x1="328.4" y1="-4.8" x2="387.2" y2="-13.0" stroke-width="1.60"/><line x1="-51.9" y1="163.9" x2="32.6" y2="149.9" stroke-width="2.11"/><line x1="32.6" y1="149.9" x2="113.9" y2="136.4" stroke-width="2.07"/><line x1="113.9" y1="136.4" x2="192.1" y2="123.5" stroke-width="2.03"/><line x1="192.1" y1="123.5" x2="267.3" y2="111.0" stroke-width="1.99"/><line x1="267.3" y1="111.0" x2="339.8" y2="99.0" stroke-width="1.95"/><line x1="339.8" y1="99.0" x2="409.7" y2="87.4" stroke-width="1.92"/><line x1="409.7" y1="87.4" x2="477.1" y2="76.3" stroke-width="1.88"/><line x1="477.1" y1="76.3" x2="542.1" y2="65.5" stroke-width="1.85"/><line x1="542.1" y1="65.5" x2="604.9" y2="55.1" stroke-width="1.82"/><line x1="604.9" y1="55.1" x2="665.6" y2="45.0" stroke-width="1.79"/><line x1="665.6" y1="45.0" x2="724.3" y2="35.3" stroke-width="1.76"/><line x1="724.3" y1="35.3" x2="781.1" y2="25.9" stroke-width="1.73"/><line x1="781.1" y1="25.9" x2="836.1" y2="16.8" stroke-width="1.70"/><line x1="836.1" y1="16.8" x2="889.3" y2="8.0" stroke-width="1.67"/><line x1="889.3" y1="8.0" x2="940.9" y2="-0.6" stroke-width="1.65"/><line x1="940.9" y1="-0.6" x2="990.9" y2="-8.8" stroke-width="1.62"/><line x1="525.1" y1="218.5" x2="603.9" y2="202.2" stroke-width="2.82"/><line x1="603.9" y1="202.2" x2="679.4" y2="186.6" stroke-width="2.76"/><line x1="679.4" y1="186.6" x2="751.8" y2="171.7" stroke-width="2.70"/><line x1="751.8" y1="171.7" x2="821.3" y2="157.4" stroke-width="2.64"/><line x1="821.3" y1="157.4" x2="888.0" y2="143.6" stroke-width="2.59"/><line x1="888.0" y1="143.6" x2="952.2" y2="130.3" stroke-width="2.54"/><line x1="952.2" y1="130.3" x2="1013.9" y2="117.6" stroke-width="2.49"/><line x1="1013.9" y1="117.6" x2="1073.4" y2="105.3" stroke-width="2.45"/><line x1="1073.4" y1="105.3" x2="1130.7" y2="93.5" stroke-width="2.40"/><line x1="1130.7" y1="93.5" x2="1185.9" y2="82.1" stroke-width="2.36"/><line x1="1185.9" y1="82.1" x2="1239.2" y2="71.1" stroke-width="2.32"/><line x1="1239.2" y1="71.1" x2="1290.6" y2="60.5" stroke-width="2.27"/></g>
<ellipse cx="183.9" cy="15.2" rx="1.75" ry="1.37" fill="#4f5463"/>
<ellipse cx="87.2" cy="140.9" rx="2.25" ry="1.76" fill="#4f5463"/>
<ellipse cx="339.8" cy="99.0" rx="2.11" ry="1.65" fill="#4f5463"/>
<ellipse cx="563.3" cy="62.0" rx="1.99" ry="1.56" fill="#4f5463"/>
<ellipse cx="551.7" cy="213.0" rx="3.09" ry="2.42" fill="#4f5463"/>
<ellipse cx="762.4" cy="29.0" rx="1.88" ry="1.47" fill="#4f5463"/>
<ellipse cx="798.4" cy="162.1" rx="2.88" ry="2.25" fill="#4f5463"/>
<ellipse cx="940.9" cy="-0.6" rx="1.78" ry="1.40" fill="#4f5463"/>
<ellipse cx="1013.9" cy="117.6" rx="2.70" ry="2.11" fill="#4f5463"/>
<ellipse cx="1203.9" cy="78.4" rx="2.54" ry="1.99" fill="#4f5463"/>
<polygon points="1229,36.5 1244,33.2 1244,140.5 1229,124.5" fill="#2e3748"/><path d="M1229,70.6 L1244,68.2 M1229,106 L1244,121.5" stroke="#3b4963" stroke-width="1"/>
<path d="M23,165.6 L29.2,174.3 M29.2,165.6 L23,174.3 M25.8,177.5 L20.2,170.5" stroke="#ff2222" stroke-width="1.3" fill="none"/>
<line x1="25.8" y1="155" x2="25.8" y2="178" stroke="#0a1aff" stroke-width="1.7"/>
<path d="M29,151 H35 L29,159.3 H35" stroke="#2434ff" stroke-width="1.4" fill="none"/>
<line x1="26" y1="177.6" x2="50" y2="175.9" stroke="#16e016" stroke-width="1.5"/>
<path d="M52.6,171.6 L56.2,176 L59.6,171.6 M56.2,176 V180.5" stroke="#22ee22" stroke-width="1.4" fill="none"/>
</svg>
<div style="position:absolute;left:0px;top:206px;width:1244px;height:2px;background:#e9a21b"></div>
<div style="position:absolute;left:0px;top:208px;width:1244px;height:486px;background:#161616"></div>
<div style="position:absolute;left:0px;top:214px;width:156px;height:25px;background:#242424;border-top-right-radius:4px"></div>
<div style="position:absolute;left:0px;top:214px;width:150px;height:1px;background:linear-gradient(90deg,#1b3f6a,#1f64c0 45%,#2272dc 75%,#242424)"></div>
<svg style="position:absolute;left:0;top:216px" width="20" height="18" viewBox="0 0 20 18"><path d="M1,1 H7.3 L9.2,3.6 H1 Z" fill="#a4a4a4"/><rect x="1" y="5" width="15" height="10" fill="#f2f2f2"/><circle cx="13" cy="11" r="5.6" fill="#242424"/><circle cx="13" cy="11" r="3.6" fill="none" stroke="#d8d8d8" stroke-width="1.5"/><path d="M10.2,13.9 L7.3,16.6" stroke="#d8d8d8" stroke-width="1.7" stroke-linecap="round"/></svg>
<div class="t" style="left:23px;top:218px;letter-spacing:-0.082px;color:#dcdcdc">Content Browser</div>
<svg style="position:absolute;left:134px;top:222px" width="8" height="8"><path d="M1,1 L7,7 M7,1 L1,7" stroke="#c8c8c8" stroke-width="1.5"/></svg>
<div style="position:absolute;left:0px;top:239px;width:1244px;height:38px;background:#242424"></div>
<div style="position:absolute;left:9px;top:244px;width:67px;height:28px;background:#373737;border:1px solid #121212;border-radius:3px;box-sizing:border-box"></div>
<svg style="position:absolute;left:22px;top:250px" width="15" height="15"><path d="M7.5,1 V14 M1,7.5 H14" stroke="#7ccb3a" stroke-width="2"/></svg>
<div class="t" style="left:41px;top:250px;letter-spacing:-0.214px;color:#dcdcdc">Add</div>
<svg style="position:absolute;left:88px;top:250px" width="22" height="15" viewBox="0 0 22 15"><ellipse cx="11" cy="7.5" rx="10.2" ry="6" fill="#cacaca" transform="rotate(-12 11 7.5)"/><text x="1.8" y="10" font-family="Liberation Sans" font-size="7.2" font-weight="bold" font-style="italic" fill="#222" transform="rotate(-6 11 7.5)" letter-spacing="0.6">FAB</text></svg>
<div class="t" style="left:113px;top:250px;letter-spacing:-0.269px;color:#c0c0c0">Fab</div>
<svg style="position:absolute;left:159px;top:249px" width="18" height="18" viewBox="0 0 18 18"><path d="M3.5,8.5 H1.5 V16.5 H16.5 V8.5 H13.5" stroke="#8e8e8e" stroke-width="1.8" fill="none" stroke-linejoin="round" stroke-linecap="round"/><path d="M4.5,1.5 C8.5,1.8 10,4.5 10,9" stroke="#d4d4d4" stroke-width="1.8" fill="none" stroke-linecap="round"/><path d="M6.6,8.5 L10,12.8 L13.4,8.5 Z" fill="#d4d4d4"/></svg>
<div class="t" style="left:179px;top:250px;letter-spacing:0.243px;color:#c0c0c0">Import</div>
<div style="position:absolute;left:0px;top:277px;width:1244px;height:2px;background:#151515"></div>
<div style="position:absolute;left:0px;top:279px;width:142px;height:415px;background:#1b1b1b"></div>
<div style="position:absolute;left:0px;top:283px;width:142px;height:29px;background:#2a2a2a"></div>
<svg style="position:absolute;left:8px;top:292px" width="8" height="10"><path d="M1,0 L7,5 L1,10 Z" fill="#9a9a9a"/></svg>
<div class="t" style="left:23px;top:289px;font-weight:bold;letter-spacing:-0.335px;color:#c8c8c8">Favorites</div>
<svg style="position:absolute;left:114px;top:289px" width="16" height="16"><circle cx="6.5" cy="6.5" r="5" stroke="#bdbdbd" stroke-width="1.6" fill="none"/><path d="M10,10 L14.5,14.5" stroke="#bdbdbd" stroke-width="1.8"/></svg>
<div style="position:absolute;left:0px;top:312px;width:142px;height:2px;background:#151515"></div>
<div style="position:absolute;left:0px;top:314px;width:142px;height:28px;background:#2a2a2a"></div>
<svg style="position:absolute;left:6px;top:323px" width="12" height="8"><path d="M0,1 L11,1 L5.5,7 Z" fill="#9a9a9a"/></svg>
<div class="t" style="left:23px;top:320px;font-weight:bold;letter-spacing:-0.576px;color:#c8c8c8">ExtendEditor</div>
<svg style="position:absolute;left:114px;top:320px" width="16" height="16"><circle cx="6.5" cy="6.5" r="5" stroke="#bdbdbd" stroke-width="1.6" fill="none"/><path d="M10,10 L14.5,14.5" stroke="#bdbdbd" stroke-width="1.8"/></svg>
<div style="position:absolute;left:2px;top:342px;width:138px;height:329px;border:1.5px solid #2af02a;box-sizing:border-box;background:#1b1b1b"></div>
<div style="position:absolute;left:4px;top:344px;width:134px;height:17px;background:#2a2f36"></div>
<div style="position:absolute;left:4px;top:361px;width:134px;height:16px;background:#0a6fe0"></div>
<svg style="position:absolute;left:5px;top:348px" width="11" height="8"><path d="M0,0 H10 L5,6 Z" fill="#6c6c6c"/></svg>
<svg style="position:absolute;left:18px;top:347px" width="17" height="13" viewBox="0 0 17 13"><path d="M0,0.6 Q0,0 0.6,0 H6 L7.5,1.8 H14 V5.3 H4.6 L0.8,11 H0 Z" fill="#c69a5c"/><path d="M4.8,6.3 H16 L13.1,12 H0.7 Z" fill="#c69a5c"/></svg>
<div class="t" style="left:36px;top:345px;letter-spacing:-0.084px;color:#c8c8c8">All</div>
<svg style="position:absolute;left:15px;top:366px" width="11" height="8"><path d="M0,0 H10 L5,6 Z" fill="#8fb5e6"/></svg>
<svg style="position:absolute;left:28px;top:363px" width="17" height="13" viewBox="0 0 17 13"><path d="M0,0.6 Q0,0 0.6,0 H6 L7.5,1.8 H14 V5.3 H4.6 L0.8,11 H0 Z" fill="#c69a5c"/><path d="M4.8,6.3 H16 L13.1,12 H0.7 Z" fill="#c69a5c"/></svg>
<div class="t" style="left:46px;top:361px;letter-spacing:-0.078px;color:#ffffff">Content</div>
<svg style="position:absolute;left:37.5px;top:378.8px" width="17" height="13" viewBox="0 0 17 13"><path d="M0.4,2.2 V1.2 Q0.4,0.3 1.3,0.3 H7 L8.3,2.2 Z" fill="#c3965a"/><rect x="0.4" y="3" width="16.3" height="9.4" rx="1.2" fill="#c3965a"/></svg>
<div class="t" style="left:56px;top:377px;letter-spacing:-0.031px;color:#c8c8c8">Blueprints</div>
<svg style="position:absolute;left:37.5px;top:394.8px" width="17" height="13" viewBox="0 0 17 13"><path d="M0.4,2.2 V1.2 Q0.4,0.3 1.3,0.3 H7 L8.3,2.2 Z" fill="#c3965a"/><rect x="0.4" y="3" width="16.3" height="9.4" rx="1.2" fill="#c3965a"/></svg>
<div class="t" style="left:56px;top:393px;letter-spacing:-0.074px;color:#c8c8c8">Maps</div>
<svg style="position:absolute;left:27px;top:412px" width="8" height="10"><path d="M1,0 L7,5 L1,10 Z" fill="#707070"/></svg>
<svg style="position:absolute;left:37.5px;top:410.8px" width="17" height="13" viewBox="0 0 17 13"><path d="M0.4,2.2 V1.2 Q0.4,0.3 1.3,0.3 H7 L8.3,2.2 Z" fill="#c3965a"/><rect x="0.4" y="3" width="16.3" height="9.4" rx="1.2" fill="#c3965a"/></svg>
<div class="t" style="left:56px;top:409px;width:82px;overflow:hidden;color:#c8c8c8;letter-spacing:-0.253px">StarterContent</div>
<svg style="position:absolute;left:17px;top:428px" width="8" height="10"><path d="M1,0 L7,5 L1,10 Z" fill="#707070"/></svg>
<svg style="position:absolute;left:28px;top:426.8px" width="17" height="13" viewBox="0 0 17 13"><path d="M0.4,2.2 V1.2 Q0.4,0.3 1.3,0.3 H7 L8.3,2.2 Z" fill="#c3965a"/><rect x="0.4" y="3" width="16.3" height="9.4" rx="1.2" fill="#c3965a"/></svg>
<div class="t" style="left:46px;top:425px;letter-spacing:-0.331px;color:#c8c8c8">Engine</div>
<svg style="position:absolute;left:17px;top:444px" width="8" height="10"><path d="M1,0 L7,5 L1,10 Z" fill="#707070"/></svg>
<svg style="position:absolute;left:28px;top:442.8px" width="17" height="13" viewBox="0 0 17 13"><path d="M0.4,2.2 V1.2 Q0.4,0.3 1.3,0.3 H7 L8.3,2.2 Z" fill="#c3965a"/><rect x="0.4" y="3" width="16.3" height="9.4" rx="1.2" fill="#c3965a"/></svg>
<div class="t" style="left:46px;top:441px;letter-spacing:-0.092px;color:#c8c8c8">Plugins</div>
<div style="position:absolute;left:0px;top:676px;width:142px;height:18px;background:#2a2a2a"></div>
<svg style="position:absolute;left:9px;top:685px" width="8" height="10"><path d="M1,0 L7,5 L1,10 Z" fill="#707070"/></svg>
<div class="t" style="left:23px;top:682px;font-weight:bold;letter-spacing:-0.534px;color:#c8c8c8">Collection</div>
<svg style="position:absolute;left:87px;top:681px" width="16" height="16"><circle cx="8" cy="8" r="6.5" stroke="#bdbdbd" stroke-width="1.4" fill="none"/><path d="M8,4.5 V11.5 M4.5,8 H11.5" stroke="#bdbdbd" stroke-width="1.4"/></svg>
<svg style="position:absolute;left:114px;top:681px" width="16" height="16"><circle cx="6.5" cy="6.5" r="5" stroke="#bdbdbd" stroke-width="1.6" fill="none"/><path d="M10,10 L14.5,14.5" stroke="#bdbdbd" stroke-width="1.8"/></svg>
<div style="position:absolute;left:142px;top:279px;width:4px;height:415px;background:#1c1c1c"></div>
<div style="position:absolute;left:146px;top:279px;width:2px;height:415px;background:#121212"></div>
<div style="position:absolute;left:148px;top:279px;width:1096px;height:415px;background:#242424"></div>
<svg style="position:absolute;left:159px;top:288px" width="32" height="16"><path d="M1,2 H16 M4,7 H13 M6.5,12 H10.5" stroke="#c8c8c8" stroke-width="1.8" stroke-linecap="round"/><path d="M21,6 L25,10 L29,6" stroke="#c8c8c8" stroke-width="1.5" fill="none"/></svg>
<div style="position:absolute;left:200px;top:286px;width:60px;height:20px;background:#0f0f0f;border-radius:10px"></div>
<svg style="position:absolute;left:206px;top:290px" width="16" height="16"><circle cx="6.5" cy="6.5" r="5" stroke="#d0d0d0" stroke-width="1.6" fill="none"/><path d="M10,10 L14.5,14.5" stroke="#d0d0d0" stroke-width="1.8"/></svg>
<svg style="position:absolute;left:162px;top:328px" width="64" height="77" viewBox="0 0 64 77"><defs><linearGradient id="fg" x1="0" y1="1" x2="1" y2="0"><stop offset="0" stop-color="#bb955e"/><stop offset="1" stop-color="#9f7d4f"/></linearGradient><linearGradient id="fb" x1="0" y1="0" x2="0" y2="1"><stop offset="0" stop-color="#8d6f47"/><stop offset="1" stop-color="#6a5233"/></linearGradient></defs><path d="M1,4.5 Q1,1.7 4,1.7 H36.5 Q38.5,1.7 39.8,3.2 L45.5,9 H64 V20 H1 Z" fill="url(#fb)"/><path d="M1,17.3 H38.5 L45.3,10 H64 V74.5 H1 Z" fill="url(#fg)"/><rect x="1" y="74.5" width="63" height="1.6" fill="#121212"/></svg>
<div class="t" style="left:188px;top:431px;letter-spacing:-0.031px;color:#c8c8c8">Blueprints</div>
<div class="t" style="left:160px;top:688px;letter-spacing:-0.129px;color:#c8c8c8">4 items</div>
<div style="position:absolute;left:1230px;top:239px;width:14px;height:6px;background:#2a2a2a"></div>
<div style="position:absolute;left:1230px;top:245px;width:14px;height:25px;background:#111111"></div>
<div style="position:absolute;left:1230px;top:270px;width:14px;height:7px;background:#2a2a2a"></div>
<div style="position:absolute;left:225px;top:32px;width:1006px;height:606px;background:#0b0b0b"></div>
<div style="position:absolute;left:227px;top:34px;width:1002px;height:602px;background:#161616;box-shadow:inset 0 0 0 1px #333333"></div>
<svg style="position:absolute;left:232px;top:39px" width="24" height="24" viewBox="0 0 24 24"><defs><linearGradient id="ug" x1="0" y1="0" x2="0" y2="1"><stop offset="0" stop-color="#a8a8a8"/><stop offset="1" stop-color="#505050"/></linearGradient></defs><circle cx="12" cy="12" r="11.1" fill="#0b0b0b" stroke="#6a6a6a" stroke-width="0.9"/><path d="M4.8,9.8 C6,7.6 8.2,6 11.2,5.2 C10.2,6.6 10.3,7.8 10.3,9.2 V15.2 C10.3,16.2 11.2,16.6 12.4,16 V8.8 C13.6,7 15.4,5.8 18,5.1 C16.9,6.4 16.6,7.6 16.6,9 V14.6 C17.4,14.2 18.4,13.6 19.2,13 C18,15.8 15.6,18.2 12.4,19.2 C10,19.8 7,18.8 6.9,16 V11 C6.9,10 6.3,9.6 4.8,9.8 Z" fill="url(#ug)"/></svg>
<div style="position:absolute;left:261px;top:37px;width:210px;height:31px;background:#242424;border-radius:4px 4px 0 0"></div>
<svg style="position:absolute;left:268px;top:44px" width="18" height="15"><rect x="0.8" y="1" width="3.4" height="13" fill="#fff"/><rect x="6" y="1" width="11.2" height="3.2" fill="#fff"/><rect x="13.7" y="6" width="3.5" height="8" fill="#fff"/><circle cx="9" cy="8.2" r="2" fill="#9a9a9a"/><path d="M6,14 C6,11 12,11 12,14 Z" fill="#9a9a9a"/></svg>
<div class="t" style="left:294px;top:45px;letter-spacing:-0.156px;color:#f0f0f0">Widget Reflector</div>
<svg style="position:absolute;left:449px;top:49px" width="8" height="8"><path d="M1,1 L7,7 M7,1 L1,7" stroke="#d8d8d8" stroke-width="1.6"/></svg>
<svg style="position:absolute;left:1110px;top:38px" width="110" height="18"><path d="M7,9.5 H17" stroke="#d8d8d8" stroke-width="1.3"/><rect x="50.5" y="3.5" width="10" height="10" stroke="#d8d8d8" stroke-width="1.3" fill="none"/><path d="M91.5,3 L102,13.5 M102,3 L91.5,13.5" stroke="#d8d8d8" stroke-width="1.4"/></svg>
<div class="t" style="left:242px;top:78px;letter-spacing:-0.201px;color:#c8c8c8">Demo Mode</div>
<div class="t" style="left:335px;top:78px;letter-spacing:0.023px;color:#c8c8c8">Atlases</div>
<div class="t" style="left:402px;top:78px;letter-spacing:-0.158px;color:#c8c8c8">Window</div>
<div style="position:absolute;left:230px;top:101px;width:996px;height:40px;background:#242424"></div>
<svg style="position:absolute;left:230px;top:101px" width="9" height="9"><path d="M0,0 H8 L0,8 Z" fill="#1a7cf0"/></svg>
<div class="t" style="left:232px;top:113px;letter-spacing:-0.108px;color:#c8c8c8">Application Scale:</div>
<div style="position:absolute;left:341px;top:104px;width:98px;height:34px;background:#0f0f0f;border:1px solid #2e2e2e;border-radius:4px;box-sizing:border-box"></div>
<div style="position:absolute;left:342px;top:105px;width:16px;height:32px;background:#3a3a3a;border-radius:3px"></div>
<div class="t" style="left:350px;top:113px;letter-spacing:-0.359px;color:#e0e0e0">1.0</div>
<div class="t" style="left:463px;top:113px;letter-spacing:-0.239px;color:#c8c8c8">Flags</div>
<svg style="position:absolute;left:496px;top:117px" width="11" height="7"><path d="M1,1 L5.5,5.5 L10,1" stroke="#c8c8c8" stroke-width="1.5" fill="none"/></svg>
<div class="t" style="left:533px;top:113px;letter-spacing:-0.256px;color:#c8c8c8">Debug Options</div>
<svg style="position:absolute;left:618px;top:117px" width="11" height="7"><path d="M1,1 L5.5,5.5 L10,1" stroke="#c8c8c8" stroke-width="1.5" fill="none"/></svg>
<div class="t" style="left:656px;top:113px;letter-spacing:-0.103px;color:#c8c8c8">Runtime Validation</div>
<svg style="position:absolute;left:763px;top:117px" width="11" height="7"><path d="M1,1 L5.5,5.5 L10,1" stroke="#c8c8c8" stroke-width="1.5" fill="none"/></svg>
<div style="position:absolute;left:230px;top:146px;width:996px;height:44px;background:#242424"></div>
<svg style="position:absolute;left:230px;top:146px" width="9" height="9"><path d="M0,0 H8 L0,8 Z" fill="#1a7cf0"/></svg>
<svg style="position:absolute;left:246px;top:158px" width="13" height="19" viewBox="0 0 13 19"><path d="M1,1 L12,11.5 H7.5 L10,17 L7.5,18 L5,12.5 L1,16 Z" fill="#c8c8c8"/></svg>
<div class="t" style="left:266px;top:160px;letter-spacing:0.044px;color:#c8c8c8">Pick Hit-Testable Widgets</div>
<svg style="position:absolute;left:428px;top:159px" width="6" height="18"><circle cx="3" cy="3" r="1.6" fill="#c8c8c8"/><circle cx="3" cy="9" r="1.6" fill="#c8c8c8"/><circle cx="3" cy="14.6" r="1.6" fill="#c8c8c8"/></svg>
<div style="position:absolute;left:444px;top:150px;width:2px;height:37px;background:#151515"></div>
<svg style="position:absolute;left:458px;top:159px" width="20" height="18"><path d="M1.5,2.5 H18 M5,8.8 H14.5 M7,15.2 H12.5" stroke="#c8c8c8" stroke-width="2.2" stroke-linecap="round"/></svg>
<div class="t" style="left:482px;top:160px;letter-spacing:-0.032px;color:#c8c8c8">Filter</div>
<svg style="position:absolute;left:514px;top:164px" width="11" height="7"><path d="M1,1 L5.5,5.5 L10,1" stroke="#c8c8c8" stroke-width="1.5" fill="none"/></svg>
<div style="position:absolute;left:846px;top:150px;width:2px;height:37px;background:#151515"></div>
<svg style="position:absolute;left:864px;top:157px" width="20" height="22" viewBox="0 0 20 22"><rect x="1" y="1" width="18" height="20" fill="#b8b8b8"/><rect x="3" y="3" width="14" height="12" fill="#242424"/><circle cx="13" cy="6.3" r="1.8" fill="#8a8a8a"/><path d="M3,15 L7.5,8 L11,13 L13,10.5 L17,15 Z" fill="#8a8a8a"/></svg>
<div class="t" style="left:888px;top:160px;letter-spacing:0.045px;color:#c8c8c8">Take Snapshot</div>
<svg style="position:absolute;left:997px;top:160px" width="14" height="16"><ellipse cx="7.2" cy="2.6" rx="5.3" ry="1.8" fill="#c8c8c8"/><ellipse cx="7.2" cy="7.4" rx="4.4" ry="1.8" fill="#c8c8c8"/><ellipse cx="7.2" cy="13.3" rx="5.3" ry="2" fill="#c8c8c8"/></svg>
<div class="t" style="left:1018px;top:160px;letter-spacing:-0.202px;color:#c8c8c8">Options</div>
<svg style="position:absolute;left:1066px;top:164px" width="11" height="7"><path d="M1,1 L5.5,5.5 L10,1" stroke="#c8c8c8" stroke-width="1.5" fill="none"/></svg>
<svg style="position:absolute;left:1100px;top:158px" width="22" height="21" viewBox="0 0 22 21"><path d="M5.5,7.5 H2.2 V18.8 H20 V7.5 H16" stroke="#8e8e8e" stroke-width="2.2" fill="none" stroke-linejoin="round" stroke-linecap="round"/><path d="M5.8,1.6 C10.5,2.2 12,5 11.8,10" stroke="#dedede" stroke-width="2.2" fill="none" stroke-linecap="round"/><path d="M7.2,9 L11.8,15.6 L16.4,9 Z" fill="#dedede"/></svg>
<div class="t" style="left:1125px;top:160px;letter-spacing:-0.113px;color:#c8c8c8">Load Snapshot</div>
<div style="position:absolute;left:230px;top:190px;width:980px;height:24px;background:#2f2f2f"></div>
<div style="position:absolute;left:525px;top:190px;width:1.5px;height:24px;background:#1c1c1c"></div>
<div style="position:absolute;left:550px;top:190px;width:1.5px;height:24px;background:#1c1c1c"></div>
<div style="position:absolute;left:676px;top:190px;width:1.5px;height:24px;background:#1c1c1c"></div>
<div style="position:absolute;left:737px;top:190px;width:1.5px;height:24px;background:#1c1c1c"></div>
<div style="position:absolute;left:838px;top:190px;width:1.5px;height:24px;background:#1c1c1c"></div>
<div style="position:absolute;left:1039px;top:190px;width:1.5px;height:24px;background:#1c1c1c"></div>
<div class="t" style="left:234px;top:194px;letter-spacing:-0.232px;color:#c8c8c8">Widget Name</div>
<div class="t" style="left:530px;top:194px;letter-spacing:-0.800px;color:#c8c8c8">FG</div>
<div class="t" style="left:555px;top:194px;letter-spacing:0.078px;color:#c8c8c8">Visibility</div>
<div class="t" style="left:681px;top:194px;letter-spacing:-0.141px;color:#c8c8c8">Focus</div>
<div class="t" style="left:742px;top:194px;letter-spacing:-0.161px;color:#c8c8c8">Clipping</div>
<div class="t" style="left:843px;top:194px;letter-spacing:-0.151px;color:#c8c8c8">Source</div>
<div class="t" style="left:1044px;top:194px;letter-spacing:-0.043px;color:#c8c8c8">Address</div>
<div style="position:absolute;left:230px;top:214px;width:996px;height:2px;background:#161616"></div>
<div style="position:absolute;left:230px;top:216px;width:984px;height:1px;background:#2a313a"></div>
<div style="position:absolute;left:230px;top:217px;width:996px;height:416px;background:#1a1a1a"></div>
<div style="position:absolute;left:230px;top:217px;width:984px;height:16px;background:#1a1a1a"></div>
<div style="position:absolute;left:230px;top:233px;width:984px;height:16px;background:#1a1a1a"></div>
<div style="position:absolute;left:230px;top:249px;width:984px;height:16px;background:#2b313a"></div>
<div style="position:absolute;left:230px;top:265px;width:984px;height:16px;background:#2b313a"></div>
<div style="position:absolute;left:230px;top:281px;width:984px;height:16px;background:#2b313a"></div>
<div style="position:absolute;left:230px;top:297px;width:984px;height:16px;background:#2b313a"></div>
<div style="position:absolute;left:230px;top:313px;width:984px;height:16px;background:#2b313a"></div>
<div style="position:absolute;left:230px;top:329px;width:984px;height:16px;background:#1a1a1a"></div>
<div style="position:absolute;left:230px;top:345px;width:984px;height:16px;background:#2b313a"></div>
<div style="position:absolute;left:230px;top:361px;width:984px;height:16px;background:#2b313a"></div>
<div style="position:absolute;left:230px;top:377px;width:984px;height:16px;background:#2b313a"></div>
<div style="position:absolute;left:230px;top:393px;width:984px;height:16px;background:#2b313a"></div>
<div style="position:absolute;left:230px;top:409px;width:984px;height:16px;background:#1a1a1a"></div>
<div style="position:absolute;left:230px;top:425px;width:984px;height:16px;background:#2b313a"></div>
<div style="position:absolute;left:230px;top:441px;width:984px;height:16px;background:#2b313a"></div>
<div style="position:absolute;left:230px;top:457px;width:984px;height:16px;background:#1a1a1a"></div>
<div style="position:absolute;left:230px;top:473px;width:984px;height:16px;background:#2b313a"></div>
<div style="position:absolute;left:230px;top:489px;width:984px;height:16px;background:#2b313a"></div>
<div style="position:absolute;left:230px;top:505px;width:984px;height:16px;background:#2b313a"></div>
<div style="position:absolute;left:230px;top:521px;width:984px;height:16px;background:#3e546f"></div>
<div style="position:absolute;left:230px;top:537px;width:984px;height:16px;background:#1a1a1a"></div>
<div style="position:absolute;left:230px;top:553px;width:984px;height:16px;background:#1a1a1a"></div>
<div style="position:absolute;left:230px;top:569px;width:984px;height:16px;background:#1a1a1a"></div>
<div style="position:absolute;left:230px;top:585px;width:984px;height:16px;background:#1a1a1a"></div>
<div style="position:absolute;left:230px;top:601px;width:984px;height:16px;background:#1a1a1a"></div>
<div style="position:absolute;left:230px;top:617px;width:984px;height:16px;background:#1a1a1a"></div>
<div style="position:absolute;left:259px;top:217px;width:2px;height:416px;background:rgba(120,120,120,0.32)"></div>
<div style="position:absolute;left:323px;top:217px;width:2px;height:416px;background:rgba(120,120,120,0.32)"></div>
<div style="position:absolute;left:339px;top:217px;width:2px;height:416px;background:rgba(120,120,120,0.32)"></div>
<div style="position:absolute;left:355px;top:217px;width:2px;height:416px;background:rgba(120,120,120,0.32)"></div>
<div style="position:absolute;left:419px;top:217px;width:2px;height:416px;background:rgba(120,120,120,0.32)"></div>
<div style="position:absolute;left:467px;top:217px;width:2px;height:416px;background:rgba(120,120,120,0.32)"></div>
<div style="position:absolute;left:499px;top:217px;width:2px;height:416px;background:rgba(120,120,120,0.32)"></div>
<div style="position:absolute;left:515px;top:217px;width:2px;height:416px;background:rgba(120,120,120,0.32)"></div>
<div style="position:absolute;left:531px;top:217px;width:2px;height:416px;background:rgba(120,120,120,0.32)"></div>
<div class="r" style="left:522px;top:217px;width:200px;text-align:center;letter-spacing:-0.038px;color:#c4c4c4">Visible</div>
<div class="r" style="left:694px;top:217px;width:200px;text-align:center;letter-spacing:-0.012px;color:#c4c4c4">No</div>
<div class="r lk" style="top:217px;left:846px;max-width:195px;color:#c4c4c4;letter-spacing:-0.1px">SBorder [SContentBrowser.cpp(76)]</div>
<div class="r lk" style="top:217px;left:1046px;color:#c4c4c4;letter-spacing:-0.394px">[CBP]</div>
<div class="r lk" style="top:217px;left:1080px;color:#c4c4c4;letter-spacing:-0.1px">0x82ce922c310</div>
<div class="r" style="left:522px;top:233px;width:200px;text-align:center;letter-spacing:-0.038px;color:#c4c4c4">Visible</div>
<div class="r" style="left:694px;top:233px;width:200px;text-align:center;letter-spacing:-0.012px;color:#c4c4c4">No</div>
<div class="r lk" style="top:233px;left:846px;max-width:195px;color:#c4c4c4;letter-spacing:-0.1px">SSeparator [SContentBrowser.cpp(77)]</div>
<div class="r lk" style="top:233px;left:1046px;color:#c4c4c4;letter-spacing:-0.394px">[CBP]</div>
<div class="r lk" style="top:233px;left:1080px;color:#c4c4c4;letter-spacing:-0.1px">0x82ce9270e10</div>
<div class="r" style="left:522px;top:249px;width:200px;text-align:center;letter-spacing:-0.038px;color:#c4c4c4">Visible</div>
<div class="r" style="left:694px;top:249px;width:200px;text-align:center;letter-spacing:-0.012px;color:#c4c4c4">No</div>
<div class="r lk" style="top:249px;left:846px;max-width:195px;color:#c4c4c4;letter-spacing:-0.1px">SSplitter [SContentBrowser.cpp(87)]</div>
<div class="r lk" style="top:249px;left:1046px;color:#c4c4c4;letter-spacing:-0.394px">[CBP]</div>
<div class="r lk" style="top:249px;left:1080px;color:#c4c4c4;letter-spacing:-0.1px">0x82ce929ed10</div>
<div class="r" style="left:522px;top:265px;width:200px;text-align:center;letter-spacing:-0.038px;color:#c4c4c4">Visible</div>
<div class="r" style="left:694px;top:265px;width:200px;text-align:center;letter-spacing:-0.012px;color:#c4c4c4">No</div>
<div class="r lk" style="top:265px;left:846px;max-width:195px;color:#c4c4c4;letter-spacing:-0.1px">SBox [SContentBrowser.cpp(879)]</div>
<div class="r lk" style="top:265px;left:1046px;color:#c4c4c4;letter-spacing:-0.394px">[CBP]</div>
<div class="r lk" style="top:265px;left:1080px;color:#c4c4c4;letter-spacing:-0.1px">0x82ce9297510</div>
<div class="r" style="left:522px;top:281px;width:200px;text-align:center;letter-spacing:-0.038px;color:#c4c4c4">Visible</div>
<div class="r" style="left:694px;top:281px;width:200px;text-align:center;letter-spacing:-0.012px;color:#c4c4c4">No</div>
<div class="r lk" style="top:281px;left:846px;max-width:195px;color:#c4c4c4;letter-spacing:-0.1px">SBorder [SContentBrowser.cpp(88)]</div>
<div class="r lk" style="top:281px;left:1046px;color:#c4c4c4;letter-spacing:-0.394px">[CBP]</div>
<div class="r lk" style="top:281px;left:1080px;color:#c4c4c4;letter-spacing:-0.1px">0x82ce9297210</div>
<div class="r" style="left:522px;top:297px;width:200px;text-align:center;letter-spacing:0.160px;color:#c4c4c4">SelfHitTestInvisible</div>
<div class="r" style="left:694px;top:297px;width:200px;text-align:center;letter-spacing:-0.012px;color:#c4c4c4">No</div>
<div class="r lk" style="top:297px;left:846px;max-width:195px;color:#c4c4c4;letter-spacing:-0.1px">SWidgetSwitcher [SContentBrowser.cpp]</div>
<div class="r lk" style="top:297px;left:1046px;color:#c4c4c4;letter-spacing:-0.394px">[CBP]</div>
<div class="r lk" style="top:297px;left:1080px;color:#c4c4c4;letter-spacing:-0.1px">0x82ce9296f10</div>
<div class="r" style="left:522px;top:313px;width:200px;text-align:center;letter-spacing:-0.038px;color:#c4c4c4">Visible</div>
<div class="r" style="left:694px;top:313px;width:200px;text-align:center;letter-spacing:0.160px;color:#c4c4c4">Yes</div>
<div class="r lk" style="top:313px;left:846px;max-width:195px;color:#c4c4c4;letter-spacing:-0.1px">SSplitter [SContentBrowser.cpp(89)]</div>
<div class="r lk" style="top:313px;left:1046px;color:#c4c4c4;letter-spacing:-0.394px">[CBP]</div>
<div class="r lk" style="top:313px;left:1080px;color:#c4c4c4;letter-spacing:-0.1px">0x82ce9296910</div>
<div class="r" style="left:522px;top:329px;width:200px;text-align:center;letter-spacing:-0.038px;color:#c4c4c4">Visible</div>
<div class="r" style="left:694px;top:329px;width:200px;text-align:center;letter-spacing:-0.012px;color:#c4c4c4">No</div>
<div class="r lk" style="top:329px;left:846px;max-width:195px;color:#c4c4c4;letter-spacing:-0.1px">SBorder [SContentBrowser.cpp(90)]</div>
<div class="r lk" style="top:329px;left:1046px;color:#c4c4c4;letter-spacing:-0.394px">[CBP]</div>
<div class="r lk" style="top:329px;left:1080px;color:#c4c4c4;letter-spacing:-0.1px">0x82ce922f010</div>
<div class="r" style="left:522px;top:345px;width:200px;text-align:center;letter-spacing:-0.038px;color:#c4c4c4">Visible</div>
<div class="r" style="left:694px;top:345px;width:200px;text-align:center;letter-spacing:-0.012px;color:#c4c4c4">No</div>
<div class="r lk" style="top:345px;left:846px;max-width:195px;color:#c4c4c4;letter-spacing:-0.1px">SBorder [SContentBrowser.cpp(92)]</div>
<div class="r lk" style="top:345px;left:1046px;color:#c4c4c4;letter-spacing:-0.394px">[CBP]</div>
<div class="r lk" style="top:345px;left:1080px;color:#c4c4c4;letter-spacing:-0.1px">0x82ce9294510</div>
<div class="r" style="left:522px;top:361px;width:200px;text-align:center;letter-spacing:-0.038px;color:#c4c4c4">Visible</div>
<div class="r" style="left:694px;top:361px;width:200px;text-align:center;letter-spacing:-0.012px;color:#c4c4c4">No</div>
<div class="r lk" style="top:361px;left:846px;max-width:195px;color:#c4c4c4;letter-spacing:-0.1px">SExpandableArea [SContentBrowser.cpp]</div>
<div class="r lk" style="top:361px;left:1046px;color:#c4c4c4;letter-spacing:-0.394px">[CBP]</div>
<div class="r lk" style="top:361px;left:1080px;color:#c4c4c4;letter-spacing:-0.1px">0x82ce91e8010</div>
<div class="r" style="left:522px;top:377px;width:200px;text-align:center;letter-spacing:-0.038px;color:#c4c4c4">Visible</div>
<div class="r" style="left:694px;top:377px;width:200px;text-align:center;letter-spacing:-0.012px;color:#c4c4c4">No</div>
<div class="r lk" style="top:377px;left:846px;max-width:195px;color:#c4c4c4;letter-spacing:-0.1px">SBorder [SExpandableArea.cpp(56)]</div>
<div class="r lk" style="top:377px;left:1046px;color:#c4c4c4;letter-spacing:-0.394px">[CBP]</div>
<div class="r lk" style="top:377px;left:1080px;color:#c4c4c4;letter-spacing:-0.1px">0x82ce9294210</div>
<div class="r" style="left:522px;top:393px;width:200px;text-align:center;letter-spacing:0.160px;color:#c4c4c4">SelfHitTestInvisible</div>
<div class="r" style="left:694px;top:393px;width:200px;text-align:center;letter-spacing:-0.012px;color:#c4c4c4">No</div>
<div class="r lk" style="top:393px;left:846px;max-width:195px;color:#c4c4c4;letter-spacing:-0.1px">SVerticalBox [SExpandableArea.cpp]</div>
<div class="r lk" style="top:393px;left:1046px;color:#c4c4c4;letter-spacing:-0.394px">[CBP]</div>
<div class="r lk" style="top:393px;left:1080px;color:#c4c4c4;letter-spacing:-0.1px">0x82ce92a1190</div>
<div class="r" style="left:522px;top:409px;width:200px;text-align:center;letter-spacing:-0.038px;color:#c4c4c4">Visible</div>
<div class="r" style="left:694px;top:409px;width:200px;text-align:center;letter-spacing:-0.012px;color:#c4c4c4">No</div>
<div class="r lk" style="top:409px;left:846px;max-width:195px;color:#c4c4c4;letter-spacing:-0.1px">SBorder [SExpandableArea.cpp(65)]</div>
<div class="r lk" style="top:409px;left:1046px;color:#c4c4c4;letter-spacing:-0.394px">[CBP]</div>
<div class="r lk" style="top:409px;left:1080px;color:#c4c4c4;letter-spacing:-0.1px">0x82ce9293c10</div>
<div class="r" style="left:522px;top:425px;width:200px;text-align:center;letter-spacing:-0.038px;color:#c4c4c4">Visible</div>
<div class="r" style="left:694px;top:425px;width:200px;text-align:center;letter-spacing:-0.012px;color:#c4c4c4">No</div>
<div class="r lk" style="top:425px;left:846px;max-width:195px;color:#c4c4c4;letter-spacing:-0.1px">SBorder [SExpandableArea.cpp(84)]</div>
<div class="r lk" style="top:425px;left:1046px;color:#c4c4c4;letter-spacing:-0.394px">[CBP]</div>
<div class="r lk" style="top:425px;left:1080px;color:#c4c4c4;letter-spacing:-0.1px">0x82ce9293f10</div>
<div class="r" style="left:522px;top:441px;width:200px;text-align:center;letter-spacing:0.160px;color:#c4c4c4">SelfHitTestInvisible</div>
<div class="r" style="left:694px;top:441px;width:200px;text-align:center;letter-spacing:-0.012px;color:#c4c4c4">No</div>
<div class="r lk" style="top:441px;left:846px;max-width:195px;color:#c4c4c4;letter-spacing:-0.1px">SVerticalBox [SContentBrowser.cpp]</div>
<div class="r lk" style="top:441px;left:1046px;color:#c4c4c4;letter-spacing:-0.394px">[CBP]</div>
<div class="r lk" style="top:441px;left:1080px;color:#c4c4c4;letter-spacing:-0.1px">0x82ce92a0c90</div>
<div class="r" style="left:522px;top:457px;width:200px;text-align:center;letter-spacing:-0.038px;color:#c4c4c4">Visible</div>
<div class="r" style="left:694px;top:457px;width:200px;text-align:center;letter-spacing:-0.012px;color:#c4c4c4">No</div>
<div class="r lk" style="top:457px;left:846px;max-width:195px;color:#c4c4c4;letter-spacing:-0.1px">SBorder [SContentBrowser.cpp(15)]</div>
<div class="r lk" style="top:457px;left:1046px;color:#c4c4c4;letter-spacing:-0.394px">[CBP]</div>
<div class="r lk" style="top:457px;left:1080px;color:#c4c4c4;letter-spacing:-0.1px">0x82ce922fc10</div>
<div class="r" style="left:522px;top:473px;width:200px;text-align:center;letter-spacing:-0.038px;color:#c4c4c4">Visible</div>
<div class="r" style="left:694px;top:473px;width:200px;text-align:center;letter-spacing:-0.012px;color:#c4c4c4">No</div>
<div class="r lk" style="top:473px;left:846px;max-width:195px;color:#c4c4c4;letter-spacing:-0.1px">SBorder [SContentBrowser.cpp(15)]</div>
<div class="r lk" style="top:473px;left:1046px;color:#c4c4c4;letter-spacing:-0.394px">[CBP]</div>
<div class="r lk" style="top:473px;left:1080px;color:#c4c4c4;letter-spacing:-0.1px">0x82ce9291810</div>
<div class="r" style="left:522px;top:489px;width:200px;text-align:center;letter-spacing:-0.038px;color:#c4c4c4">Visible</div>
<div class="r" style="left:694px;top:489px;width:200px;text-align:center;letter-spacing:-0.012px;color:#c4c4c4">No</div>
<div class="r lk" style="top:489px;left:846px;max-width:195px;color:#c4c4c4;letter-spacing:-0.1px">SPathView [SContentBrowser.cpp(1)]</div>
<div class="r lk" style="top:489px;left:1046px;color:#c4c4c4;letter-spacing:-0.394px">[CBP]</div>
<div class="r lk" style="top:489px;left:1080px;color:#c4c4c4;letter-spacing:-0.1px">0x82ce9248410</div>
<div class="r" style="left:522px;top:505px;width:200px;text-align:center;letter-spacing:0.160px;color:#c4c4c4">SelfHitTestInvisible</div>
<div class="r" style="left:694px;top:505px;width:200px;text-align:center;letter-spacing:-0.012px;color:#c4c4c4">No</div>
<div class="r lk" style="top:505px;left:846px;max-width:195px;color:#c4c4c4;letter-spacing:-0.1px">SVerticalBox [SPathView.cpp(1071)]</div>
<div class="r lk" style="top:505px;left:1046px;color:#c4c4c4;letter-spacing:-0.394px">[CBP]</div>
<div class="r lk" style="top:505px;left:1080px;color:#c4c4c4;letter-spacing:-0.1px">0x82ce92a0510</div>
<div class="r" style="left:522px;top:521px;width:200px;text-align:center;letter-spacing:-0.038px;color:#ffffff">Visible</div>
<svg style="position:absolute;left:707px;top:523px" width="12" height="12"><path d="M1.2,6.8 L3.1,5.4 L5.1,7.9 L9.8,0.8 L11.3,1.8 L5.4,11.2 Z" fill="#ffffff"/></svg>
<div class="r" style="left:694px;top:521px;width:200px;text-align:center;letter-spacing:0.160px;color:#ffffff">Yes</div>
<div class="r lk" style="top:521px;left:846px;max-width:195px;color:#ffffff;letter-spacing:-0.1px">STreeView&lt;TSharedPtr&lt;FTreeItem&gt;&gt;</div>
<div class="r lk" style="top:521px;left:1046px;color:#ffffff;letter-spacing:-0.394px">[CBP]</div>
<div class="r lk" style="top:521px;left:1080px;color:#ffffff;letter-spacing:-0.1px">0x82ce91d7810</div>
<div class="r" style="left:522px;top:537px;width:200px;text-align:center;letter-spacing:0.160px;color:#c4c4c4">SelfHitTestInvisible</div>
<div class="r" style="left:694px;top:537px;width:200px;text-align:center;letter-spacing:-0.012px;color:#c4c4c4">No</div>
<div class="r lk" style="top:537px;left:846px;max-width:195px;color:#c4c4c4;letter-spacing:-0.1px">SHorizontalBox [STableViewBase.cpp]</div>
<div class="r lk" style="top:537px;left:1046px;color:#c4c4c4;letter-spacing:-0.394px">[CBP]</div>
<div class="r lk" style="top:537px;left:1080px;color:#c4c4c4;letter-spacing:-0.1px">0x82ce92a0290</div>
<div class="r" style="left:522px;top:553px;width:200px;text-align:center;letter-spacing:-0.038px;color:#c4c4c4">Visible</div>
<div class="r" style="left:694px;top:553px;width:200px;text-align:center;letter-spacing:-0.012px;color:#c4c4c4">No</div>
<div class="r lk" style="top:553px;left:846px;max-width:195px;color:#c4c4c4;letter-spacing:-0.1px">SBorder [SContentBrowser.cpp(93)]</div>
<div class="r lk" style="top:553px;left:1046px;color:#c4c4c4;letter-spacing:-0.394px">[CBP]</div>
<div class="r lk" style="top:553px;left:1080px;color:#c4c4c4;letter-spacing:-0.1px">0x82ce9296610</div>
<div class="r" style="left:522px;top:569px;width:200px;text-align:center;letter-spacing:-0.038px;color:#c4c4c4">Visible</div>
<div class="r" style="left:694px;top:569px;width:200px;text-align:center;letter-spacing:-0.012px;color:#c4c4c4">No</div>
<div class="r lk" style="top:569px;left:846px;max-width:195px;color:#c4c4c4;letter-spacing:-0.1px">SBorder [SContentBrowser.cpp(14)]</div>
<div class="r lk" style="top:569px;left:1046px;color:#c4c4c4;letter-spacing:-0.394px">[CBP]</div>
<div class="r lk" style="top:569px;left:1080px;color:#c4c4c4;letter-spacing:-0.1px">0x82ce929ea10</div>
<div class="r" style="left:522px;top:585px;width:200px;text-align:center;letter-spacing:-0.159px;color:#c4c4c4">Collapsed</div>
<svg style="position:absolute;left:707px;top:587px" width="12" height="12"><path d="M1.2,6.8 L3.1,5.4 L5.1,7.9 L9.8,0.8 L11.3,1.8 L5.4,11.2 Z" fill="#c4c4c4"/></svg>
<div class="r" style="left:694px;top:585px;width:200px;text-align:center;letter-spacing:-0.012px;color:#c4c4c4">No</div>
<div class="r lk" style="top:585px;left:846px;max-width:195px;color:#c4c4c4;letter-spacing:-0.1px">SButton [SDockingTabStack.cpp(1)]</div>
<div class="r lk" style="top:585px;left:1046px;color:#c4c4c4;letter-spacing:-0.394px">[CBP]</div>
<div class="r lk" style="top:585px;left:1080px;color:#c4c4c4;letter-spacing:-0.1px">0x82ce8dcc810</div>
<div class="r" style="left:522px;top:601px;width:200px;text-align:center;letter-spacing:-0.159px;color:#c4c4c4">Collapsed</div>
<svg style="position:absolute;left:707px;top:603px" width="12" height="12"><path d="M1.2,6.8 L3.1,5.4 L5.1,7.9 L9.8,0.8 L11.3,1.8 L5.4,11.2 Z" fill="#c4c4c4"/></svg>
<div class="r" style="left:694px;top:601px;width:200px;text-align:center;letter-spacing:-0.012px;color:#c4c4c4">No</div>
<div class="r lk" style="top:601px;left:846px;max-width:195px;color:#c4c4c4;letter-spacing:-0.1px">SDockingTabStack [TabManager.cpp]</div>
<div class="r lk" style="top:601px;left:1046px;color:#c4c4c4;letter-spacing:-0.394px">[CBP]</div>
<div class="r lk" style="top:601px;left:1080px;color:#c4c4c4;letter-spacing:-0.1px">0x82ce91ec010</div>
<div class="r" style="left:522px;top:617px;width:200px;text-align:center;letter-spacing:-0.159px;color:#c4c4c4">Collapsed</div>
<svg style="position:absolute;left:707px;top:619px" width="12" height="12"><path d="M1.2,6.8 L3.1,5.4 L5.1,7.9 L9.8,0.8 L11.3,1.8 L5.4,11.2 Z" fill="#c4c4c4"/></svg>
<div class="r" style="left:694px;top:617px;width:200px;text-align:center;letter-spacing:-0.012px;color:#c4c4c4">No</div>
<div class="r lk" style="top:617px;left:846px;max-width:195px;color:#c4c4c4;letter-spacing:-0.1px">SDockingTabStack [TabManager.cpp]</div>
<div class="r lk" style="top:617px;left:1046px;color:#c4c4c4;letter-spacing:-0.394px">[CBP]</div>
<div class="r lk" style="top:617px;left:1080px;color:#c4c4c4;letter-spacing:-0.1px">0x82ce91ed010</div>
<div style="position:absolute;left:1046px;top:216px;width:31px;height:1px;border-top:1px dotted #d0d0d0;box-sizing:border-box"></div>
<div style="position:absolute;left:1080px;top:216px;width:91px;height:1px;border-top:1px dotted #d0d0d0;box-sizing:border-box"></div>
<div style="position:absolute;left:535px;top:585px;width:24px;height:16px;background:#ffffff;border:1px solid #9a9a9a;box-sizing:border-box"></div>
<div style="position:absolute;left:1216px;top:400px;width:7px;height:142px;background:#5a5a5a;border-radius:3.5px"></div>
</body></html>
